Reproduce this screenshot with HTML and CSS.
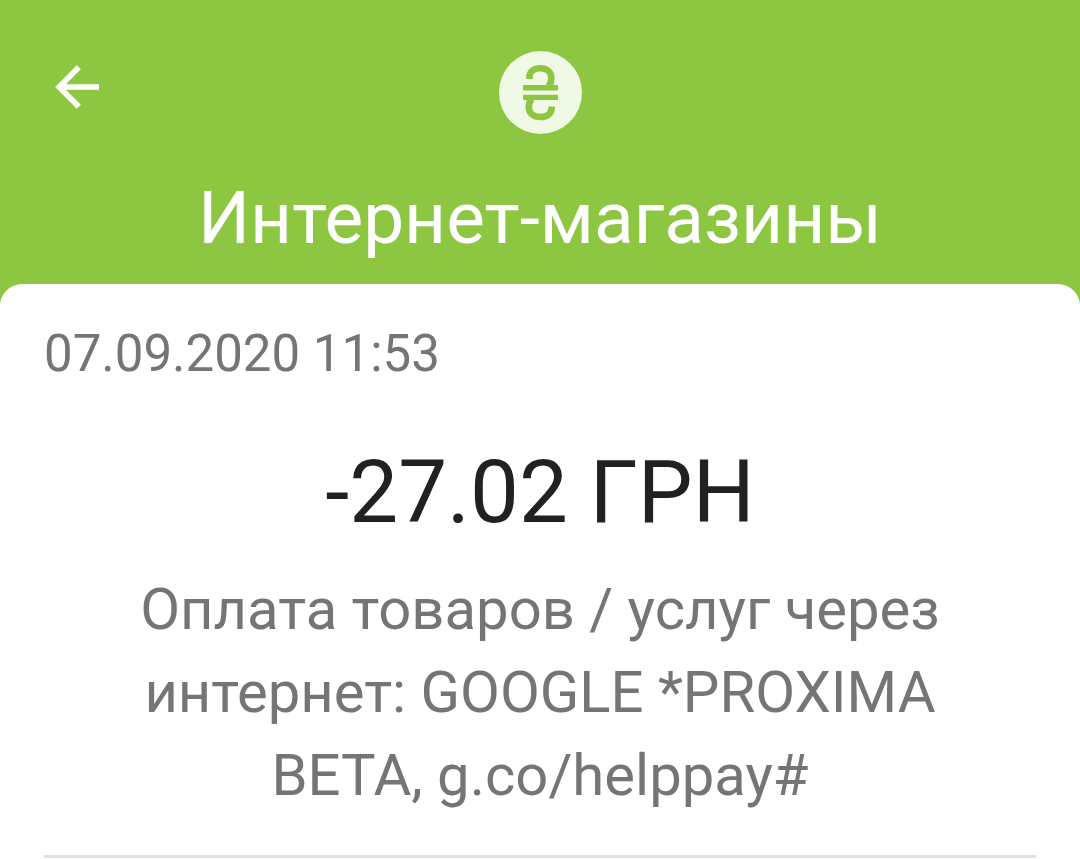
FILE: index.html
```html
<!DOCTYPE html>
<html lang="ru">
<head>
    <meta charset="UTF-8">
    <meta name="viewport" content="width=device-width, initial-scale=1.0">
    <title>Интернет-магазины</title>
    <link rel="stylesheet" href="styles.css">
</head>
<body>

<header>
    <button class="back" type="button" aria-label="Назад">
        <svg viewBox="0 0 46 44" width="46" height="44">
            <path d="M45 22H6M24.8 2.2L5.2 22l19.6 19.8" fill="none" stroke="#fff" stroke-width="5.7"/>
        </svg>
    </button>
    <svg class="category-icon" viewBox="0 0 83 83" width="83" height="83" aria-hidden="true">
        <circle cx="41.5" cy="41.5" r="41.5" fill="#f0f8e6"/>
        <g fill="none" stroke="#8dc741" stroke-width="6.6">
            <path d="M30.4 28V26.5C30.4 20.5 35 17.3 41.5 17.3S52.3 21 52.3 27C52.3 31 51.5 34 48.5 35.5"/>
            <path d="M52.7 55.5V56.5C52.7 62.7 48 66 41.5 66S29.8 62.7 29.8 56C29.8 52 31 49.5 33.5 48"/>
        </g>
        <rect x="24" y="34" width="35" height="5.4" rx="1" fill="#8dc741"/>
        <rect x="24" y="43.7" width="35" height="5.4" rx="1" fill="#8dc741"/>
    </svg>
    <h1>Интернет-магазины</h1>
</header>

<main>
    <time class="date" datetime="2020-09-07T11:53">07.09.2020 11:53</time>
    <p class="amount">-27.02 ГРН</p>
    <p class="description">Оплата товаров / услуг через интернет: GOOGLE *PROXIMA BETA, g.co/helppay#</p>
    <hr>
</main>

</body>
</html>
```

FILE: styles.css
```css
* {
    box-sizing: border-box;
}

body {
    display: flex;
    flex-direction: column;
    min-height: 100vh;
    margin: 0;
    font-family: Roboto, sans-serif;
    background-color: #8dc741;
}

header {
    display: grid;
    grid-template-columns: 46px 1fr 46px;
    padding: 51px 54px 24px;
    color: #fff;
    text-align: center;
}

.back {
    height: 44px;
    margin-top: 14px;
    padding: 0;
    border: none;
    background: none;
    cursor: pointer;
}

.back svg,
.category-icon {
    display: block;
}

.category-icon {
    justify-self: center;
}

h1 {
    grid-column: 1 / -1;
    margin: 42px 0 0;
    font-size: 73px;
    font-weight: 400;
    line-height: 84px;
}

main {
    flex: 1;
    padding: 40px 44px 0;
    border-radius: 22px 22px 0 0;
    background-color: #fff;
    color: #757575;
}

.date {
    display: block;
    font-size: 51px;
    line-height: 60px;
}

.amount {
    margin: 56px 0 0;
    color: #212121;
    font-size: 87px;
    line-height: 104px;
    text-align: center;
}

.description {
    margin: 24px 80px 0;
    font-size: 58px;
    line-height: 83px;
    text-align: center;
}

hr {
    height: 3px;
    margin: 38px 0 0;
    border: none;
    background-color: #e0e0e0;
}
```
